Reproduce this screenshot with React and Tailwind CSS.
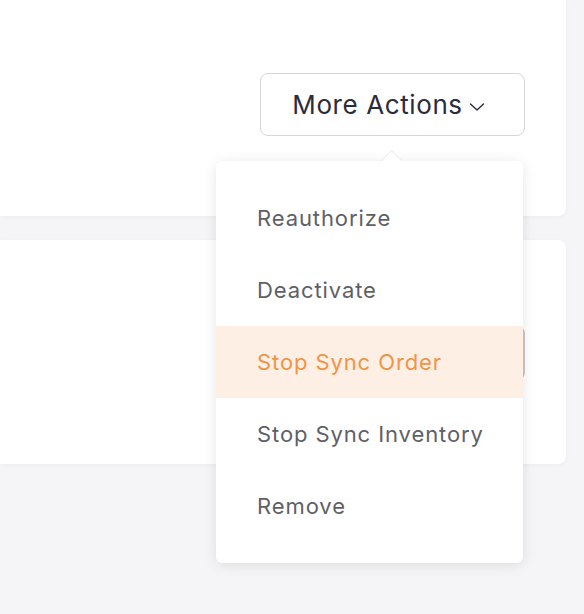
import React from "react";

const items = ["Reauthorize", "Deactivate", "Stop Sync Order", "Stop Sync Inventory", "Remove"];

export default function App() {
  return (
    <div className="relative h-[614px] w-[584px] overflow-hidden bg-[#f5f5f7]" style={{ fontFamily: 'Inter, "Liberation Sans", Arial, sans-serif' }}>
      <div className="flex h-[216px] w-[566px] items-start justify-end rounded-br-lg bg-white pr-[41px] pt-[73px] shadow-[0_1px_4px_rgba(0,0,0,0.04)]">
        <button className="flex h-[63px] w-[265px] items-center justify-center gap-[6px] rounded-lg border border-[#d6d6da] bg-white pr-[8px] text-[26px] tracking-[0.6px] text-[#2c2c3a]">
          <span>More Actions</span>
          <svg width="16" height="10" viewBox="0 0 16 10" fill="none" className="mt-[4px]">
            <path d="M1.5 2 L8 8 L14.5 2" stroke="#2c2c3a" strokeWidth="1.4" strokeLinecap="round" strokeLinejoin="round" />
          </svg>
        </button>
      </div>
      <div className="mt-[24px] flex h-[224px] w-[566px] justify-end rounded-r-lg bg-white pr-[41px] pt-[87px] shadow-[0_1px_4px_rgba(0,0,0,0.04)]">
        <div className="h-[52px] w-[264px] rounded-md border-r-2 border-[#c9c9cd]" />
      </div>

      <div className="absolute left-[216px] top-[161px] w-[307px] rounded-md bg-white py-[21px] shadow-[0_2px_14px_rgba(0,0,0,0.10)]">
        <div className="absolute -top-[8px] left-[168px] h-[15px] w-[15px] rotate-45 border-l border-t border-[#ececef] bg-white" />
        <div className="relative">
          {items.map((it) => {
            const active = it === "Stop Sync Order";
            return (
              <div
                key={it}
                className={
                  active
                    ? "flex h-[72px] items-center bg-[#fdefe4] pl-[41px] text-[22px] tracking-[0.9px] text-[#ef9547]"
                    : "flex h-[72px] items-center pl-[41px] text-[22px] tracking-[0.9px] text-[#5f5f66]"
                }
              >
                {it}
              </div>
            );
          })}
        </div>
      </div>
    </div>
  );
}
